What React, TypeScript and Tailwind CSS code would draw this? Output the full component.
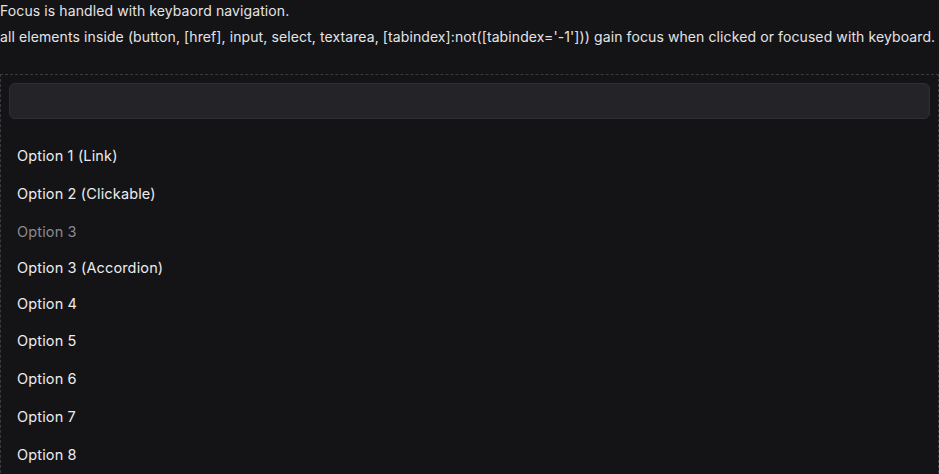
export default function App() {
  const items: { label: string; h: string; muted?: boolean }[] = [
    { label: "Option 1 (Link)", h: "h-[38px]" },
    { label: "Option 2 (Clickable)", h: "h-[38px]" },
    { label: "Option 3", h: "h-[38px]", muted: true },
    { label: "Option 3 (Accordion)", h: "h-[34px]" },
    { label: "Option 4", h: "h-[37px]" },
    { label: "Option 5", h: "h-[38px]" },
    { label: "Option 6", h: "h-[38px]" },
    { label: "Option 7", h: "h-[38px]" },
    { label: "Option 8", h: "h-[38px]" },
  ];
  return (
    <div
      className="min-h-[474px] w-full bg-[#141416] text-[#e4e4e7] overflow-hidden"
      style={{ fontFamily: "Inter, 'Noto Sans', sans-serif" }}
    >
      <p className="text-[14px] leading-[22px] tracking-[0.1px] whitespace-nowrap">Focus is handled with keybaord navigation.</p>
      <p className="text-[14px] leading-[22px] tracking-[0.1px] mt-[4px] whitespace-nowrap">
        all elements inside (button, [href], input, select, textarea, [tabindex]:not([tabindex='-1'])) gain focus when clicked or focused with keyboard.
      </p>
      <div className="mt-[26px] border border-dashed border-[#3a3a40] p-[8px]">
        <input
          className="block w-full h-[36px] rounded-[6px] bg-[#232328] border border-[#2e2e34] outline-none"
          aria-label="search"
        />
        <ul className="mt-[18px]">
          {items.map((it) => (
            <li
              key={it.label}
              className={`${it.h} flex items-center px-[8px] text-[14.5px] font-normal tracking-[0.15px] ${
                it.muted ? "text-[#8b8b90]" : "text-[#ececee]"
              }`}
            >
              {it.label}
            </li>
          ))}
        </ul>
      </div>
    </div>
  );
}
